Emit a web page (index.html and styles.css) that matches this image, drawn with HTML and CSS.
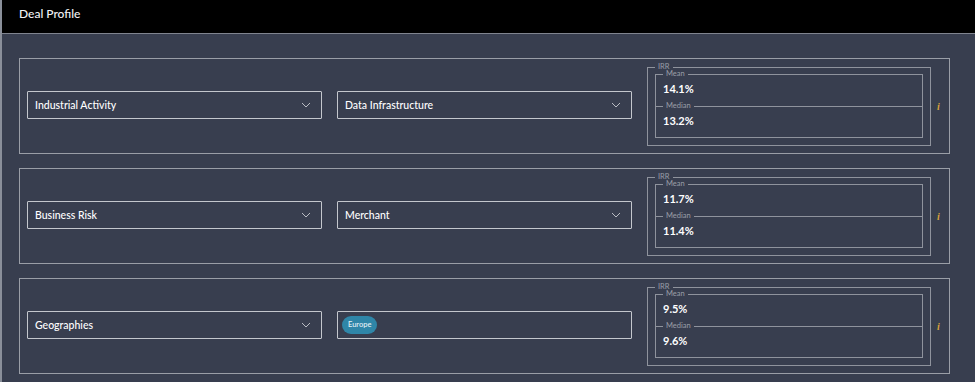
FILE: index.html
```html
<!DOCTYPE html>
<html lang="en">
<head>
  <meta charset="UTF-8">
  <title>Deal Profile</title>
<link rel="stylesheet" href="styles.css">
</head>
<body>
  <header class="topbar">
    <h1>Deal Profile</h1>
  </header>
  <main class="profile">

    <section class="card">
      <div class="select">
        <span>Industrial Activity</span>
        <svg class="chev" viewBox="0 0 10 6" width="10" height="6"><path d="M1 1l4 4 4-4"/></svg>
      </div>
      <div class="select">
        <span>Data Infrastructure</span>
        <svg class="chev" viewBox="0 0 10 6" width="10" height="6"><path d="M1 1l4 4 4-4"/></svg>
      </div>
      <fieldset class="irr">
        <legend>IRR</legend>
        <fieldset class="stat mean">
          <legend>Mean</legend>
          <b>14.1%</b>
        </fieldset>
        <fieldset class="stat median">
          <legend>Median</legend>
          <b>13.2%</b>
        </fieldset>
      </fieldset>
      <span class="info">i</span>
    </section>

    <section class="card">
      <div class="select">
        <span>Business Risk</span>
        <svg class="chev" viewBox="0 0 10 6" width="10" height="6"><path d="M1 1l4 4 4-4"/></svg>
      </div>
      <div class="select">
        <span>Merchant</span>
        <svg class="chev" viewBox="0 0 10 6" width="10" height="6"><path d="M1 1l4 4 4-4"/></svg>
      </div>
      <fieldset class="irr">
        <legend>IRR</legend>
        <fieldset class="stat mean">
          <legend>Mean</legend>
          <b>11.7%</b>
        </fieldset>
        <fieldset class="stat median">
          <legend>Median</legend>
          <b>11.4%</b>
        </fieldset>
      </fieldset>
      <span class="info">i</span>
    </section>

    <section class="card">
      <div class="select">
        <span>Geographies</span>
        <svg class="chev" viewBox="0 0 10 6" width="10" height="6"><path d="M1 1l4 4 4-4"/></svg>
      </div>
      <div class="select tags">
        <span class="chip">Europe</span>
      </div>
      <fieldset class="irr">
        <legend>IRR</legend>
        <fieldset class="stat mean">
          <legend>Mean</legend>
          <b>9.5%</b>
        </fieldset>
        <fieldset class="stat median">
          <legend>Median</legend>
          <b>9.6%</b>
        </fieldset>
      </fieldset>
      <span class="info">i</span>
    </section>

  </main>
</body>
</html>
```

FILE: styles.css
```css
* {
  box-sizing: border-box;
  margin: 0;
}

html, body {
  height: 100%;
}

body {
  background: #383e4f;
  border-left: 2px solid #8a8f9a;
  font-family: Lato, "Open Sans", sans-serif;
  color: #f2f3f5;
  overflow: hidden;
}

.topbar {
  background: #000;
  height: 34px;
  border-bottom: 1px solid #80848f;
  padding: 7px 0 0 17px;
}

.topbar h1 {
  font-size: 12px;
  font-weight: 500;
  line-height: 14px;
}

.profile {
  padding: 24px 0 0 17px;
  display: flex;
  flex-direction: column;
  gap: 14px;
}

.card {
  width: 931px;
  height: 96px;
  border: 1px solid #9a9ea7;
  display: flex;
  align-items: center;
  padding: 0 0 0 7px;
}

.select {
  width: 295px;
  height: 28px;
  margin-top: -2px;
  border: 1px solid #c4c7cd;
  border-radius: 1px;
  display: flex;
  align-items: center;
  justify-content: space-between;
  padding: 0 10px 0 7px;
  margin-right: 15px;
  font-size: 10.5px;
  font-weight: 500;
  color: #fff;
}

.chev {
  fill: none;
  stroke: #b9bcc3;
  stroke-width: 1;
}

.tags {
  padding-left: 4px;
}

.chip {
  background: #2f86a8;
  color: #e6f1f6;
  font-size: 7.5px;
  border-radius: 9px;
  padding: 4px 6px;
  line-height: 10px;
}

.irr {
  width: 284px;
  height: 83px;
  margin-top: -3px;
  border: 1px solid #8f939d;
  padding: 0 7px 7px 7px;
}

.irr legend,
.stat legend {
  font-size: 7.5px;
  color: #9a9ea8;
  padding: 0 3px;
  line-height: 8px;
}

.stat {
  border: 1px solid #8f939d;
  padding: 4px 0 0 7px;
  height: 36px;
}

.stat b {
  display: block;
  font-size: 11px;
  font-weight: 700;
  color: #fff;
  line-height: 14px;
}

.mean {
  margin-top: -1px;
  border-bottom: 0;
}

.median {
  margin-top: -4px;
  height: 36px;
}

.info {
  margin-left: 6px;
  color: #d9a23b;
  font-style: italic;
  font-weight: 700;
  font-size: 10px;
  font-family: "Liberation Serif", serif;
}
```
